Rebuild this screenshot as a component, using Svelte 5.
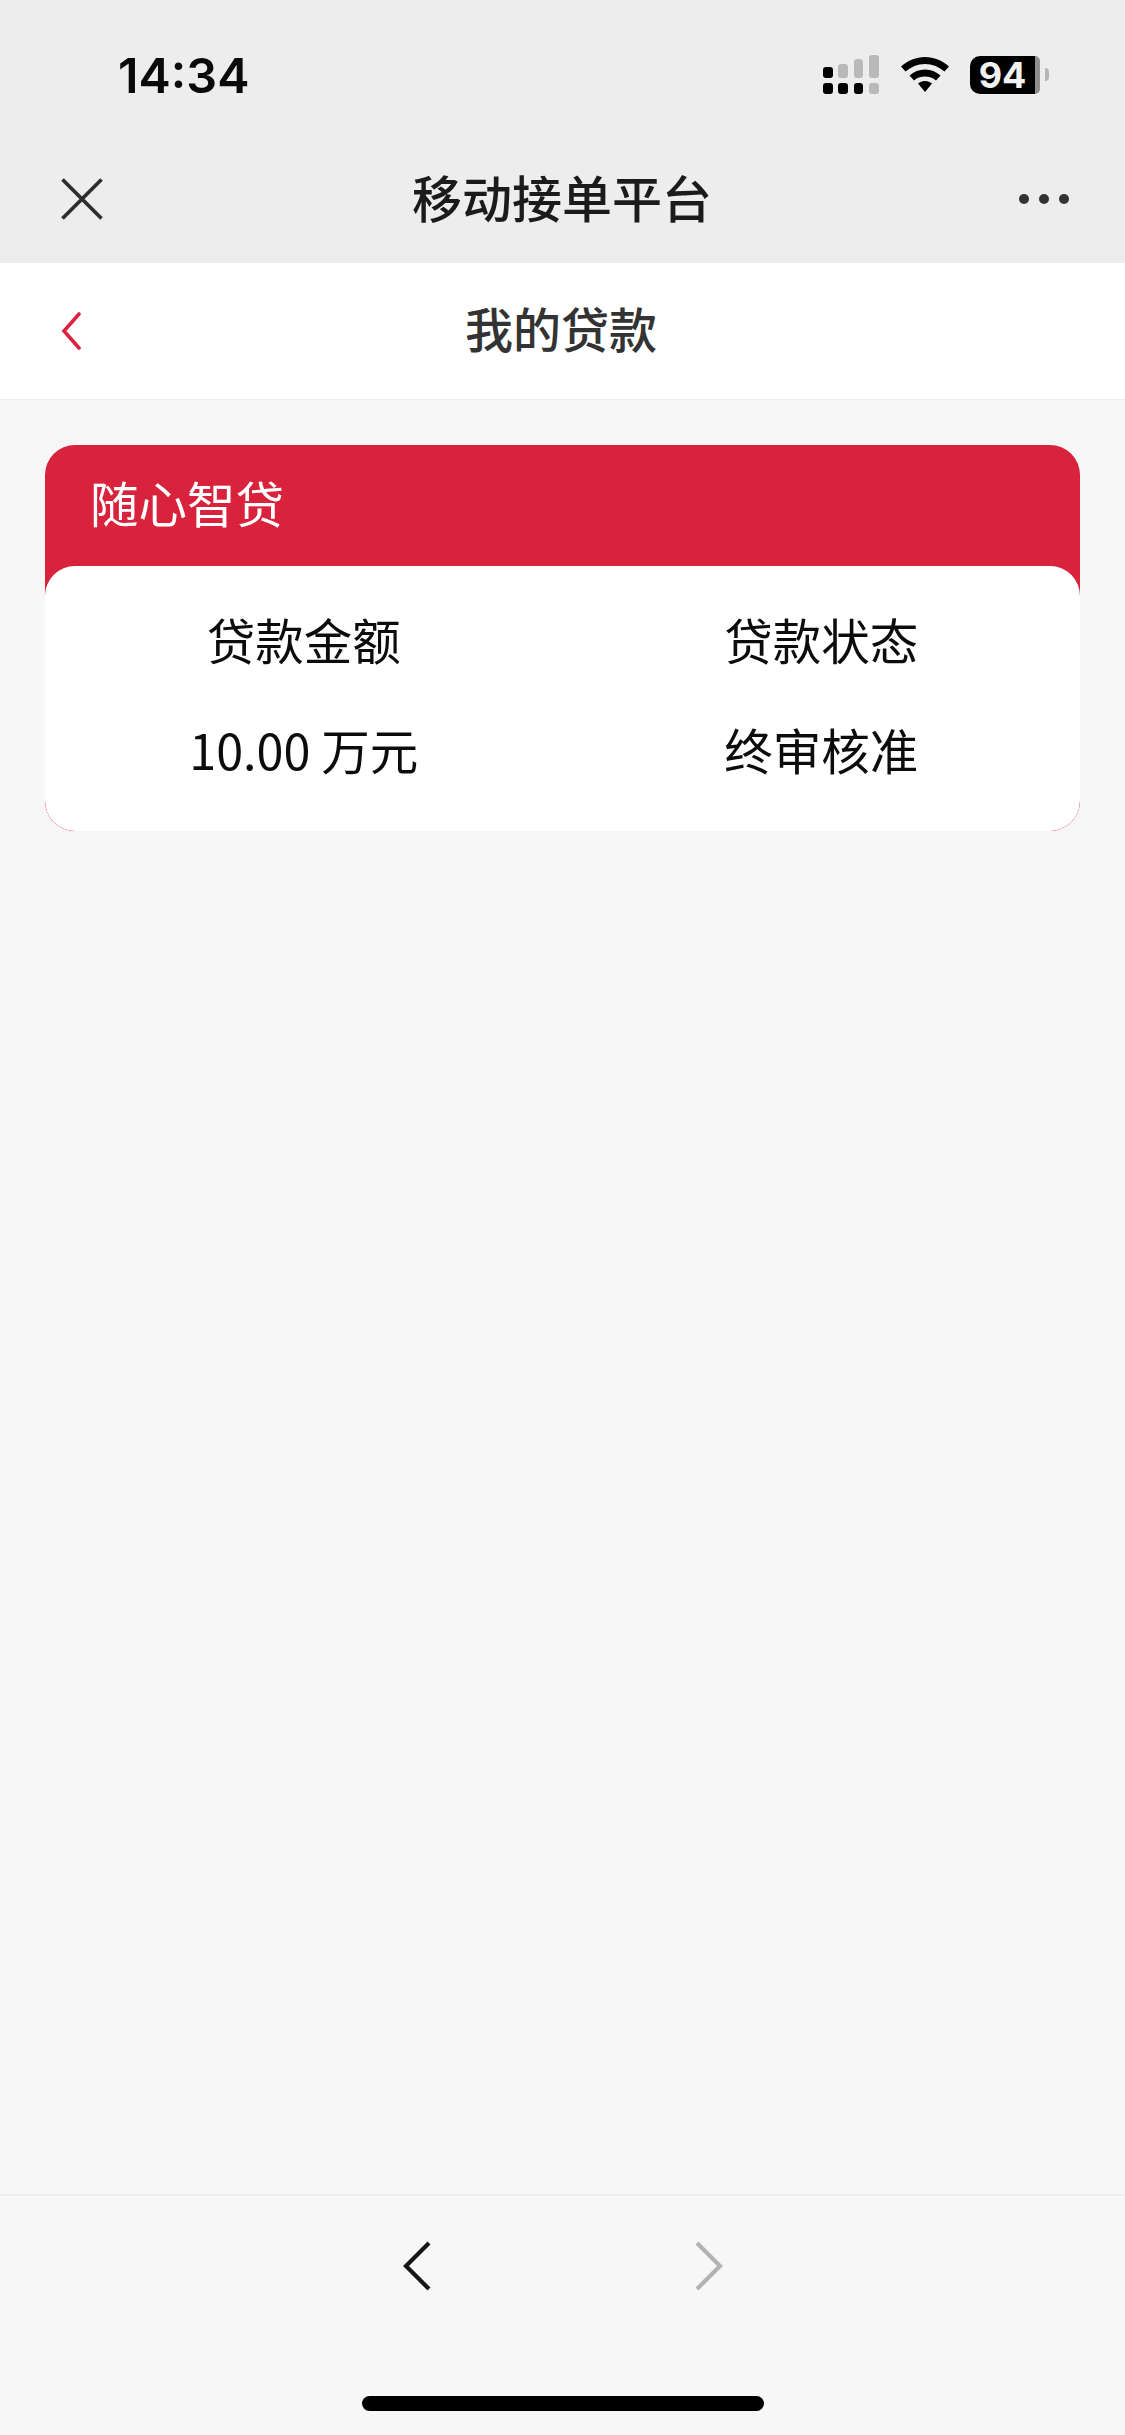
<script>
	const loanInfo = [
		{ label: "贷款金额", value: "10.00 万元" },
		{ label: "贷款状态", value: "终审核准" }
	]
</script>

<div class="page">
	<header class="wechat-top">
		<div class="status-bar">
			<span class="time">14:34</span>
			<div class="status-icons">
				<svg class="signal" width="56" height="39" viewBox="0 0 56 39">
					<rect x="0" y="12" width="10" height="11" rx="3" fill="#000" />
					<rect x="15" y="9" width="10" height="14" rx="3" fill="#b9b9b9" />
					<rect x="31" y="4" width="9" height="19" rx="3" fill="#b9b9b9" />
					<rect x="46" y="0" width="10" height="23" rx="3" fill="#b9b9b9" />
					<rect x="0" y="28" width="10" height="11" rx="3" fill="#000" />
					<rect x="15" y="28" width="10" height="11" rx="3" fill="#000" />
					<rect x="31" y="28" width="9" height="11" rx="3" fill="#000" />
					<rect x="46" y="28" width="10" height="11" rx="3" fill="#b9b9b9" />
				</svg>
				<svg class="wifi" width="48" height="35" viewBox="0 0 48 35">
					<path d="M24 0C15 0 7 3.500 0 9.500L4.500 14.500C10 10 16.500 7 24 7C31.500 7 38 10 43.500 14.500L48 9.500C41 3.500 33 0 24 0Z" fill="#000" />
					<path d="M24 12.500C18 12.500 13 14.500 8.500 18.500L13 23.500C16 21 19.500 19.500 24 19.500C28.500 19.500 32 21 35 23.500L39.500 18.500C35 14.500 30 12.500 24 12.500Z" fill="#000" />
					<path d="M24 24C21 24 19 25 17 26.500L24 35L31 26.500C29 25 27 24 24 24Z" fill="#000" />
				</svg>
				<div class="battery">
					<div class="battery-body">94</div>
					<span class="battery-rest"></span>
					<span class="battery-nub"></span>
				</div>
			</div>
		</div>
		<div class="wechat-nav">
			<svg class="close-icon" width="42" height="42" viewBox="0 0 42 42">
				<path d="M1.500 1.500L40.500 40.500M40.500 1.500L1.500 40.500" stroke="#2e2e2e" stroke-width="3.800" fill="none" />
			</svg>
			<h1 class="wechat-title">移动接单平台</h1>
			<svg class="more-icon" width="50" height="10" viewBox="0 0 50 10">
				<circle cx="5" cy="5" r="5" fill="#333" />
				<circle cx="25" cy="5" r="5" fill="#333" />
				<circle cx="45" cy="5" r="5" fill="#333" />
			</svg>
		</div>
	</header>

	<div class="sub-header">
		<svg class="back-icon" width="20" height="38" viewBox="0 0 20 38">
			<path d="M18 2L3 19L18 36" stroke="#dc2340" stroke-width="3.600" fill="none" stroke-linecap="round" />
		</svg>
		<h2 class="sub-title">我的贷款</h2>
		<span></span>
	</div>

	<main class="content">
		<section class="loan-card">
			<div class="loan-name">随心智贷</div>
			<div class="loan-body">
				{#each loanInfo as item}
					<div class="loan-col">
						<div class="loan-cell">{item.label}</div>
						<div class="loan-cell">{item.value}</div>
					</div>
				{/each}
			</div>
		</section>
	</main>

	<footer class="toolbar">
		<div class="toolbar-arrows">
			<svg width="28" height="50" viewBox="0 0 28 50">
				<path d="M26 2L3 25L26 48" stroke="#161616" stroke-width="4.200" fill="none" />
			</svg>
			<svg width="28" height="50" viewBox="0 0 28 50">
				<path d="M2 2L25 25L2 48" stroke="#b3b3b3" stroke-width="4.200" fill="none" />
			</svg>
		</div>
		<div class="home-bar"></div>
	</footer>
</div>

<style>
	:global(body) {
		margin: 0;
		background: #f6f6f6;
	}
	.page {
		display: flex;
		flex-direction: column;
		height: 2435px;
		font-family: "Noto Sans CJK SC", "Noto Sans", sans-serif;
	}
	.wechat-top {
		background: #ededed;
		height: 263px;
	}
	.status-bar {
		display: flex;
		justify-content: space-between;
		align-items: center;
		height: 135px;
		padding: 30px 76px 15px 118px;
		box-sizing: border-box;
	}
	.time {
		font-family: Inter, "Liberation Sans", sans-serif;
		font-size: 48.500px;
		font-weight: 600;
		color: #0a0a0a;
	}
	.status-icons {
		display: flex;
		align-items: center;
		gap: 22px;
		margin-top: -1px;
	}
	.battery {
		display: flex;
		align-items: center;
		margin-left: -1px;
	}
	.battery-body {
		width: 65px;
		height: 38px;
		background: #000;
		border-radius: 10px 0 0 10px;
		color: #f2f2f2;
		font-family: Inter, "Liberation Sans", sans-serif;
		font-size: 36px;
		font-weight: 700;
		line-height: 38px;
		text-align: center;
	}
	.battery-rest {
		width: 5px;
		height: 38px;
		background: #8f8f8f;
		border-radius: 0 8px 8px 0;
	}
	.battery-nub {
		width: 4px;
		height: 13px;
		margin-left: 5px;
		background: #b5b5b5;
		border-radius: 0 6px 6px 0;
	}
	.wechat-nav {
		display: grid;
		grid-template-columns: 1fr auto 1fr;
		align-items: center;
		height: 128px;
		padding: 0 56px 0 61px;
	}
	.wechat-title {
		margin: 0;
		padding: 0 6px 6px 0;
		font-size: 50px;
		font-weight: 500;
		color: #1b1b1b;
	}
	.more-icon {
		justify-self: end;
	}
	.sub-header {
		display: grid;
		grid-template-columns: 1fr auto 1fr;
		align-items: center;
		height: 136px;
		padding: 0 61px;
		background: #fff;
		border-bottom: 1px solid #ececec;
	}
	.sub-title {
		margin: 0;
		padding: 0 3px 8px 0;
		font-size: 48px;
		font-weight: 500;
		color: #333;
	}
	.content {
		flex: 1;
		padding: 45px;
	}
	.loan-card {
		overflow: hidden;
		background: #d9223b;
		border-radius: 30px;
	}
	.loan-name {
		height: 121px;
		padding: 0 45px;
		color: #fff;
		font-size: 48.500px;
		line-height: 115px;
	}
	.loan-body {
		display: grid;
		grid-template-columns: 1fr 1fr;
		height: 265px;
		padding-top: 18px;
		box-sizing: border-box;
		background: #fff;
		border-radius: 30px;
	}
	.loan-cell {
		height: 110px;
		color: #0c0c0c;
		font-size: 48.500px;
		line-height: 110px;
		text-align: center;
	}
	.toolbar {
		height: 241px;
		box-sizing: border-box;
		background: #f7f7f7;
		border-top: 2px solid #eeeeee;
		display: flex;
		flex-direction: column;
		align-items: center;
	}
	.toolbar-arrows {
		display: flex;
		gap: 264px;
		margin-top: 45px;
	}
	.home-bar {
		width: 402px;
		height: 15px;
		margin-top: 105px;
		background: #000;
		border-radius: 8px;
	}
</style>
